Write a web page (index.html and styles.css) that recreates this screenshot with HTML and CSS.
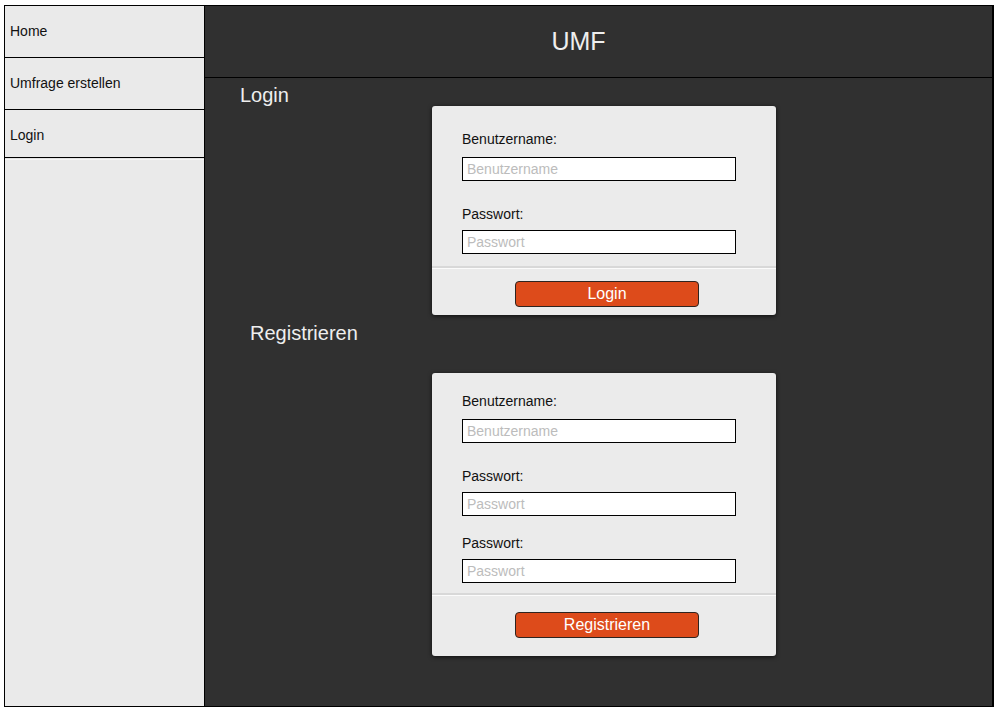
FILE: index.html
```html
<!DOCTYPE html>
<html lang="de">
<head>
<meta charset="utf-8">
<title>UMF</title>
<link rel="stylesheet" href="styles.css">
</head>
<body>
<div class="app">
  <nav class="sidebar">
    <a class="nav-item" href="#">Home</a>
    <a class="nav-item" href="#">Umfrage erstellen</a>
    <a class="nav-item nav-item--short" href="#">Login</a>
    <div class="nav-rest"></div>
  </nav>
  <main class="main">
    <header class="header"><h1 class="brand">UMF</h1></header>
    <section class="content">
      <h2 class="heading heading--login">Login</h2>
      <form class="card card--login">
        <div class="fields">
          <div class="field">
            <label class="label">Benutzername:</label>
            <input class="input" type="text" placeholder="Benutzername">
          </div>
          <div class="field">
            <label class="label">Passwort:</label>
            <input class="input" type="password" placeholder="Passwort">
          </div>
        </div>
        <div class="sep"></div>
        <div class="actions"><button class="btn" type="button">Login</button></div>
      </form>

      <h2 class="heading heading--register">Registrieren</h2>
      <form class="card card--register">
        <div class="fields">
          <div class="field">
            <label class="label">Benutzername:</label>
            <input class="input" type="text" placeholder="Benutzername">
          </div>
          <div class="field">
            <label class="label">Passwort:</label>
            <input class="input" type="password" placeholder="Passwort">
          </div>
          <div class="field field--tight">
            <label class="label">Passwort:</label>
            <input class="input" type="password" placeholder="Passwort">
          </div>
        </div>
        <div class="sep"></div>
        <div class="actions"><button class="btn" type="button">Registrieren</button></div>
      </form>
    </section>
  </main>
</div>
</body>
</html>
```

FILE: styles.css
```css
* { box-sizing: border-box; }

html, body {
  margin: 0;
  background: #ffffff;
}

body {
  padding: 5px 0 0 4px;
  font-family: "Liberation Sans", Arial, sans-serif;
  color: #111;
}

.app {
  display: flex;
  width: 990px;
  height: 702px;
  border: 1px solid #000;
  border-right-width: 2px;
}

.sidebar {
  width: 200px;
  flex: none;
  display: flex;
  flex-direction: column;
  background: #eaeaea;
  border-right: 1px solid #000;
}

.nav-item {
  display: block;
  height: 52px;
  padding: 17px 0 0 5px;
  font-size: 14px;
  line-height: 16px;
  color: #111;
  text-decoration: none;
  border-bottom: 1px solid #000;
}

.nav-item--short { height: 48px; }

.nav-rest {
  flex: 1;
  border-top: 1px solid #e2e2e2;
  box-shadow: inset 0 1px 0 #f6f6f6;
}

.main {
  flex: 1;
  display: flex;
  flex-direction: column;
  background: #303030;
}

.header {
  height: 72px;
  flex: none;
  display: flex;
  align-items: center;
  justify-content: center;
  border-bottom: 1px solid #000;
}

.brand {
  margin: 0 0 0 -40px;
  font-size: 25px;
  font-weight: normal;
  line-height: 29px;
  color: #eeeeee;
}

.content {
  display: flex;
  flex-direction: column;
  align-items: flex-start;
}

.heading {
  margin: 0;
  font-size: 20px;
  font-weight: normal;
  line-height: 20px;
  color: #eeeeee;
}

.heading--login { margin: 7px 0 0 35px; }
.heading--register { margin: 8px 0 0 45px; }

.card {
  width: 344px;
  margin-left: 227px;
  background: #ebebeb;
  border-radius: 3px;
  box-shadow: 0 1px 4px rgba(0, 0, 0, 0.7);
}

.card--login { margin-top: 1px; padding: 25px 0 8px; }
.card--register { margin-top: 30px; padding: 20px 0 18px; }

.fields {
  display: flex;
  flex-direction: column;
  gap: 25px;
  padding: 0 40px 0 30px;
}

.field {
  display: flex;
  flex-direction: column;
}

.field--tight { margin-top: -6px; }

.label {
  display: block;
  font-size: 14px;
  line-height: 16px;
  margin-bottom: 8px;
  color: #111;
}

.field:first-child .label { margin-bottom: 10px; }

.input {
  width: 274px;
  height: 24px;
  margin: 0;
  padding: 0 4px;
  border: 1px solid #000;
  border-radius: 0;
  background: #fff;
  font-family: "Liberation Sans", Arial, sans-serif;
  font-size: 14px;
  color: #111;
  outline: none;
}

.input::placeholder { color: #bcbcbc; }

.sep {
  height: 3px;
  border-top: 2px solid #d8d8d8;
  border-bottom: 1px solid #fbfbfb;
}

.card--login .sep { margin-top: 12px; }
.card--register .sep { margin-top: 10px; }

.actions {
  display: flex;
  justify-content: center;
  padding-left: 6px;
}

.card--login .actions { margin-top: 12px; }
.card--register .actions { margin-top: 16px; }

.btn {
  width: 184px;
  height: 26px;
  padding: 0;
  border: 1px solid #2e2420;
  border-radius: 4px;
  background: #dd4b1b;
  color: #fff;
  font-family: "Liberation Sans", Arial, sans-serif;
  font-size: 16px;
  line-height: 24px;
  cursor: pointer;
}
```
